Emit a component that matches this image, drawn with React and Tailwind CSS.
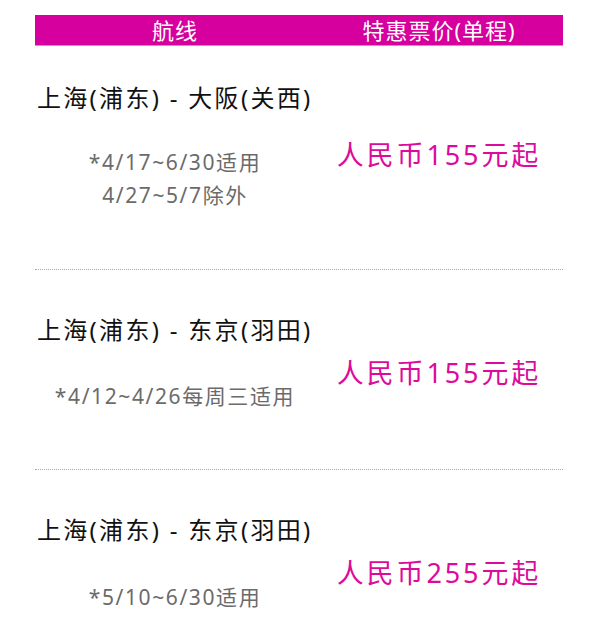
const routes = [
  {
    title: "上海(浦东) - 大阪(关西)",
    notes: ["*4/17~6/30适用", "4/27~5/7除外"],
    price: "人民币155元起",
  },
  {
    title: "上海(浦东) - 东京(羽田)",
    notes: ["*4/12~4/26每周三适用"],
    price: "人民币155元起",
  },
  {
    title: "上海(浦东) - 东京(羽田)",
    notes: ["*5/10~6/30适用"],
    price: "人民币255元起",
  },
];

const font = { fontFamily: "'Noto Sans', 'Noto Sans CJK SC', sans-serif" };

export default function App() {
  return (
    <div className="bg-white min-h-[643px] pt-[15px] pl-[35px]" style={font}>
      <div className="w-[528px]">
        <div className="grid grid-cols-[280px_248px] h-[31px] bg-[#d5009d] border-b border-[#ee7fcb] text-white text-[22px] tracking-[1px] leading-[31px]">
          <div className="text-center">航线</div>
          <div className="text-center">特惠票价(单程)</div>
        </div>

        {routes.map((r, i) => (
          <div
            key={i}
            className={
              "grid grid-cols-[280px_248px] " +
              (i === 0
                ? "pt-[36px] pb-[57px]"
                : i === 1
                ? "pt-[44px] pb-[56px] border-t border-dotted border-[#a8a8a8]"
                : "pt-[44px] pb-[28px] border-t border-dotted border-[#a8a8a8]")
            }
          >
            <div>
              <div className="pl-[2px] text-[24px] tracking-[2.3px] leading-[32px] text-[#111]">
                {r.title}
              </div>
              <div
                className={
                  "text-center text-[21px] tracking-[1.6px] leading-[33px] text-[#6b6b6b] " +
                  (i === 0 ? "mt-[32px]" : i === 1 ? "mt-[34px]" : "mt-[35px]")
                }
              >
                {r.notes.map((n) => (
                  <div key={n}>{n}</div>
                ))}
              </div>
            </div>
            <div className="flex items-center justify-center">
              <span
                className={
                  "text-[27px] tracking-[2.9px] text-[#dd0a9c] " +
                  (i === 0 ? "mt-[16px]" : "mt-[19px]")
                }
              >
                {r.price}
              </span>
            </div>
          </div>
        ))}
      </div>
    </div>
  );
}
